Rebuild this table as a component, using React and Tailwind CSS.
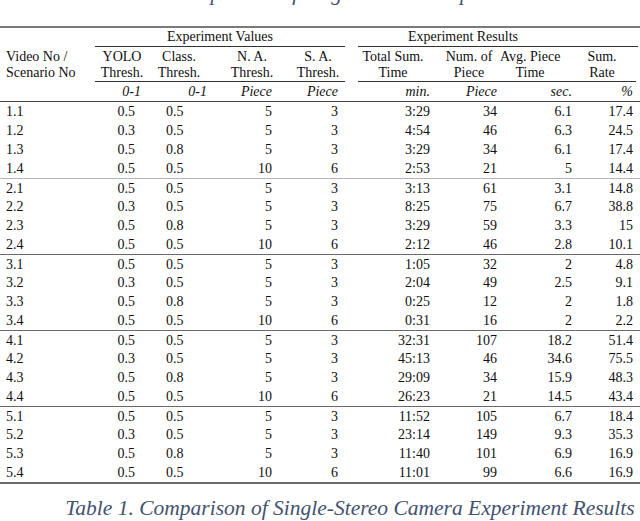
import React from 'react';

const rows = [
    ['1.1', '0.5', '0.5', '5', '3', '3:29', '34', '6.1', '17.4'],
    ['1.2', '0.3', '0.5', '5', '3', '4:54', '46', '6.3', '24.5'],
    ['1.3', '0.5', '0.8', '5', '3', '3:29', '34', '6.1', '17.4'],
    ['1.4', '0.5', '0.5', '10', '6', '2:53', '21', '5', '14.4'],
    ['2.1', '0.5', '0.5', '5', '3', '3:13', '61', '3.1', '14.8'],
    ['2.2', '0.3', '0.5', '5', '3', '8:25', '75', '6.7', '38.8'],
    ['2.3', '0.5', '0.8', '5', '3', '3:29', '59', '3.3', '15'],
    ['2.4', '0.5', '0.5', '10', '6', '2:12', '46', '2.8', '10.1'],
    ['3.1', '0.5', '0.5', '5', '3', '1:05', '32', '2', '4.8'],
    ['3.2', '0.3', '0.5', '5', '3', '2:04', '49', '2.5', '9.1'],
    ['3.3', '0.5', '0.8', '5', '3', '0:25', '12', '2', '1.8'],
    ['3.4', '0.5', '0.5', '10', '6', '0:31', '16', '2', '2.2'],
    ['4.1', '0.5', '0.5', '5', '3', '32:31', '107', '18.2', '51.4'],
    ['4.2', '0.3', '0.5', '5', '3', '45:13', '46', '34.6', '75.5'],
    ['4.3', '0.5', '0.8', '5', '3', '29:09', '34', '15.9', '48.3'],
    ['4.4', '0.5', '0.5', '10', '6', '26:23', '21', '14.5', '43.4'],
    ['5.1', '0.5', '0.5', '5', '3', '11:52', '105', '6.7', '18.4'],
    ['5.2', '0.3', '0.5', '5', '3', '23:14', '149', '9.3', '35.3'],
    ['5.3', '0.5', '0.8', '5', '3', '11:40', '101', '6.9', '16.9'],
    ['5.4', '0.5', '0.5', '10', '6', '11:01', '99', '6.6', '16.9'],
];

// group separators: first one is a light hairline, the rest are darker
const separator = {
    4: 'border-t border-[#b4b4b4]',
    8: 'border-t border-[#6a6a6a]',
    12: 'border-t border-[#6a6a6a]',
    16: 'border-t border-[#6a6a6a]',
};

const DataRow = ({ row, className }) => (
    <div className={`flex h-[19px] items-center leading-[19px] ${className || ''}`}>
        <div className="w-[95px] pl-[6px]">{row[0]}</div>
        <div className="w-[50px] pr-[10px] text-right">{row[1]}</div>
        <div className="w-[65px] pl-[21px] text-left">{row[2]}</div>
        <div className="w-[68px] pr-[6px] text-right">{row[3]}</div>
        <div className="w-[67px] pr-[7px] text-right">{row[4]}</div>
        <div className="w-[13px]" />
        <div className="w-[77px] pr-[5px] text-right">{row[5]}</div>
        <div className="w-[65px] pr-[3px] text-right">{row[6]}</div>
        <div className="w-[77px] pr-[5px] text-right">{row[7]}</div>
        <div className="w-[63px] pr-[7px] text-right">{row[8]}</div>
    </div>
);

const App = () => {
    return (
        <div className="w-[640px] h-[521px] overflow-hidden bg-white text-[14px] text-[#0f0f0f] font-['Liberation_Serif','Times_New_Roman',serif]">
            {/* previous caption, mostly scrolled off the top */}
            <div className="h-[26px] overflow-hidden">
                <div className="-mt-[19px] pl-[60px] text-center text-[21.5px] leading-[24px] italic text-[#43526e]">
                    Table 1. Comparison of Single Camera Experiment Results
                </div>
            </div>

            <div className="border-t-2 border-[#7a7a7a]">
                <div className="flex h-[19px] leading-[18px]">
                    <div className="w-[95px]" />
                    <div className="w-[250px] border-b border-[#333] text-center">Experiment Values</div>
                    <div className="w-[13px]" />
                    <div className="w-[280px] border-b border-[#333] pr-[70px] text-center">Experiment Results</div>
                </div>

                <div className="flex h-[35px] pt-[2px] leading-[16px] whitespace-nowrap">
                    <div className="w-[95px] pl-[6px]">
                        <div>Video No /</div>
                        <div>Scenario No</div>
                    </div>
                    <div className="flex w-[250px] border-b border-[#333]">
                        <div className="w-[50px] pl-[4px] text-center">YOLO<br />Thresh.</div>
                        <div className="w-[65px] pl-[3px] text-center">Class.<br />Thresh.</div>
                        <div className="w-[68px] pl-[16px] text-center">N. A.<br />Thresh.</div>
                        <div className="w-[67px] pl-[13px] text-center">S. A.<br />Thresh.</div>
                    </div>
                    <div className="w-[13px]" />
                    <div className="flex w-[278px] border-b border-[#333]">
                        <div className="w-[77px] pr-[7px] text-center">Total Sum.<br />Time</div>
                        <div className="w-[65px] pl-[3px] text-center">Num. of<br />Piece</div>
                        <div className="w-[77px] pr-[17px] text-center">Avg. Piece<br />Time</div>
                        <div className="w-[59px] pr-[9px] text-center">Sum.<br />Rate</div>
                    </div>
                </div>

                <div className="flex h-[20px] items-center border-b-[1.5px] border-[#444] italic leading-[18px]">
                    <div className="w-[95px]" />
                    <div className="w-[50px] pr-[4px] text-right">0-1</div>
                    <div className="w-[65px] pr-[3px] text-right">0-1</div>
                    <div className="w-[68px] pr-[6px] text-right">Piece</div>
                    <div className="w-[67px] pr-[7px] text-right">Piece</div>
                    <div className="w-[13px]" />
                    <div className="w-[77px] pr-[5px] text-right">min.</div>
                    <div className="w-[65px] pr-[3px] text-right">Piece</div>
                    <div className="w-[77px] pr-[5px] text-right">sec.</div>
                    <div className="w-[63px] pr-[7px] text-right">%</div>
                </div>

                <div className="border-b-2 border-[#6a6a6a]">
                    {rows.map((row, i) => (
                        <DataRow key={row[0]} row={row} className={separator[i]} />
                    ))}
                </div>
            </div>

            <div className="mt-[13px] pl-[60px] text-center text-[21.5px] leading-[22px] italic text-[#43526e]">
                Table 1. Comparison of Single-Stereo Camera Experiment Results
            </div>
        </div>
    );
};

export default App;
